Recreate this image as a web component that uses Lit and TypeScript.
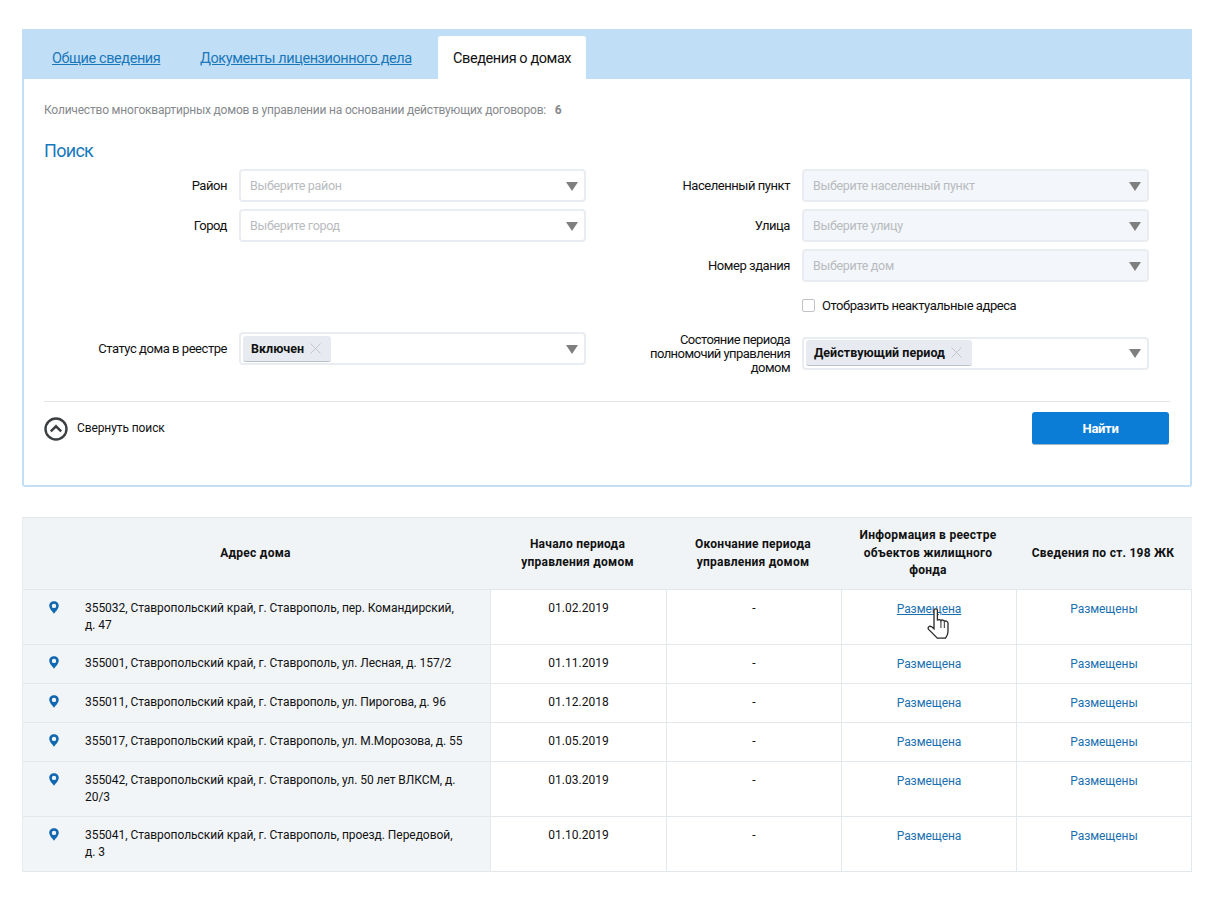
import { LitElement, html, css, svg } from "lit";
import { customElement } from "lit/decorators.js";

const rows = [
  { a: "355032, Ставропольский край, г. Ставрополь, пер. Командирский, д. 47", s: "01.02.2019", tall: true, hover: true },
  { a: "355001, Ставропольский край, г. Ставрополь, ул. Лесная, д. 157/2", s: "01.11.2019" },
  { a: "355011, Ставропольский край, г. Ставрополь, ул. Пирогова, д. 96", s: "01.12.2018" },
  { a: "355017, Ставропольский край, г. Ставрополь, ул. М.Морозова, д. 55", s: "01.05.2019" },
  { a: "355042, Ставропольский край, г. Ставрополь, ул. 50 лет ВЛКСМ, д. 20/3", s: "01.03.2019", tall: true },
  { a: "355041, Ставропольский край, г. Ставрополь, проезд. Передовой, д. 3", s: "01.10.2019", tall: true },
];

@customElement("app-root")
export class AppRoot extends LitElement {
  static styles = css`
    :host { display: block; width: 1220px; height: 904px; background: #fff; font-family: Roboto, "Liberation Sans", sans-serif; color: #111; box-sizing: border-box; padding: 29px 28px 0 22px; }
    * { box-sizing: border-box; }
    .card { height: 458px; border: 2px solid #c3dff5; border-top: 0; border-radius: 0 0 3px 3px; margin-bottom: 30px; }
    .tabs { height: 50px; margin: 0 -2px; background: #c0dff7; display: flex; align-items: flex-end; padding-left: 30px; }
    .tab { height: 43px; font-size: 14.5px; letter-spacing: -0.42px; line-height: 45px; white-space: nowrap; }
    .tab a { color: #1a77b9; text-decoration: underline; display: inline-block; }
    .tab.t1 { width: 148px; }
    .tab.t2 { width: 238px; }
    .tab.active { width: 148px; background: #fff; border-radius: 3px 3px 0 0; padding-left: 15px; color: #111; }
    .body { padding: 0 20px; }
    .count { font-size: 12px; letter-spacing: -0.2px; color: #86898c; margin-top: 23px; line-height: 16px; height: 16px; }
    .count b { margin-left: 6px; font-weight: 700; }
    h2 { margin: 21px 0 0; font-size: 18px; letter-spacing: -0.7px; line-height: 24px; font-weight: 400; color: #1878bd; height: 24px; }
    .form { display: grid; grid-template-columns: 542px 563px; margin-top: 6px; }
    .col { display: flex; flex-direction: column; }
    .row { display: flex; align-items: center; gap: 12px; margin-bottom: 7px; }
    .row.flush { margin-bottom: 0; }
    .row.state { margin: 20px 0 0; }
    .lab { font-size: 13px; letter-spacing: -0.45px; text-align: right; flex: 1 1 auto; line-height: 17px; }
    .row.state .lab { flex: 0 0 143px; margin: 1px 0 -1px auto; line-height: 14px; letter-spacing: -0.55px; }
    .sel { width: 347px; flex: none; height: 33px; border: 2px solid #e9edf1; border-radius: 4px; background: #fff; display: flex; align-items: center; padding: 0 6px 0 9px; font-size: 12.5px; letter-spacing: -0.3px; color: #b8bbbe; position: relative; }
    .sel.off { background: #f3f6fa; }
    .sel .ph { flex: 1; }
    .arrow { width: 0; height: 0; border-left: 6.5px solid transparent; border-right: 6.5px solid transparent; border-top: 9px solid #7f7f7f; margin-top: 1px; }
    .chip { height: 26px; margin-left: -7px; background: #e7ebf1; border-bottom: 1px solid #b9c1cb; border-radius: 3px; display: flex; align-items: center; gap: 5px; padding: 0 9px 0 8px; font-size: 12.5px; letter-spacing: 0.03px; font-weight: 700; color: #111; margin-right: auto; }
    .chip svg { display: block; }
    .left-spacer { height: 83px; }
    .check { display: flex; align-items: center; gap: 7px; font-size: 13px; letter-spacing: -0.45px; margin: 16px 0 0 216px; height: 14px; }
    .box { width: 13px; height: 13px; border: 1px solid #bfc3c7; border-radius: 2px; background: #fff; flex: none; }
    .rule { height: 1px; background: #e3e5e7; margin-top: 27px; width: 1126px; }
    .foot { display: flex; justify-content: space-between; width: 1125px; padding-top: 10px; }
    .collapse { display: flex; align-items: flex-start; gap: 9px; font-size: 12px; letter-spacing: -0.1px; padding-top: 5px; line-height: 16px; }
    .collapse svg { display: block; }
    .collapse span { padding-top: 3px; }
    .btn { width: 137px; height: 33px; background: #0c7dd6; border-bottom: 1px solid #9db6cb; border-radius: 3px; color: #fff; font-size: 13px; letter-spacing: -0.3px; font-weight: 700; display: flex; align-items: center; justify-content: center; }
    .tbl { display: grid; grid-template-columns: 468px 176px 175px 175px 175px; width: 1170px; border-top: 1px solid #e3e8ed; border-left: 1px solid #e9edf1; }
    .c { border-right: 1px solid #e3e8ed; border-bottom: 1px solid #e3e8ed; font-size: 12px; line-height: 17px; text-align: center; padding: 10px 10px 0; position: relative; }
    .h { background: #f0f4f7; height: 72px; font-weight: 700; letter-spacing: 0.25px; line-height: 17.5px; border-right: 0; display: flex; align-items: center; justify-content: center; padding: 0 16px 0 13px; }
    .addr { background: #f1f5f8; text-align: left; padding: 10px 25px 0 62px; letter-spacing: -0.05px; }
    .addr svg { position: absolute; left: 26px; top: 11px; }
    .rh { height: 39px; }
    .rh.tall { height: 55px; }
    .link { color: #1a6fb0; padding-top: 11px; letter-spacing: -0.08px; }
    .link.hover span { text-decoration: underline; }
    .hand { position: absolute; left: 85px; top: 18px; }
  `;

  private cross() {
    return svg`<svg width="13" height="13" viewBox="0 0 13 13"><path d="M1.5 1.5 L11.5 11.5 M11.5 1.5 L1.5 11.5" stroke="#c3c7cc" stroke-width="1" fill="none"/></svg>`;
  }

  private select(ph: string, off = false) {
    return html`<div class="sel ${off ? "off" : ""}"><span class="ph">${ph}</span><span class="arrow"></span></div>`;
  }

  private chipSel(t: string) {
    return html`<div class="sel"><span class="chip">${t}${this.cross()}</span><span class="arrow"></span></div>`;
  }

  render() {
    return html`
      <div class="card">
        <div class="tabs">
          <div class="tab t1"><a>Общие сведения</a></div>
          <div class="tab t2"><a>Документы лицензионного дела</a></div>
          <div class="tab active">Сведения о домах</div>
        </div>
        <div class="body">
          <div class="count">Количество многоквартирных домов в управлении на основании действующих договоров: <b>6</b></div>
          <h2>Поиск</h2>
          <div class="form">
            <div class="col">
              <div class="row"><div class="lab">Район</div>${this.select("Выберите район")}</div>
              <div class="row"><div class="lab">Город</div>${this.select("Выберите город")}</div>
              <div class="left-spacer"></div>
              <div class="row"><div class="lab">Статус дома в реестре</div>${this.chipSel("Включен")}</div>
            </div>
            <div class="col">
              <div class="row"><div class="lab">Населенный пункт</div>${this.select("Выберите населенный пункт", true)}</div>
              <div class="row"><div class="lab">Улица</div>${this.select("Выберите улицу", true)}</div>
              <div class="row flush"><div class="lab">Номер здания</div>${this.select("Выберите дом", true)}</div>
              <div class="check"><span class="box"></span>Отобразить неактуальные адреса</div>
              <div class="row state"><div class="lab">Состояние периода полномочий управления домом</div>${this.chipSel("Действующий период")}</div>
            </div>
          </div>
          <div class="rule"></div>
          <div class="foot">
            <div class="collapse">
              <svg width="24" height="24" viewBox="0 0 24 24"><circle cx="12" cy="12" r="10.5" fill="none" stroke="#3c3f42" stroke-width="2.4"/><path d="M6.8 14.4 L12 9.3 L17.2 14.4" fill="none" stroke="#3c3f42" stroke-width="2.4"/></svg>
              <span>Свернуть поиск</span>
            </div>
            <div class="btn">Найти</div>
          </div>
        </div>
      </div>
      <div class="tbl">
        <div class="c h">Адрес дома</div>
        <div class="c h">Начало периода управления домом</div>
        <div class="c h">Окончание периода управления домом</div>
        <div class="c h">Информация в реестре объектов жилищного фонда</div>
        <div class="c h">Сведения по ст. 198 ЖК</div>
        ${rows.map((r) => html`
          <div class="c addr rh ${r.tall ? "tall" : ""}">
            <svg width="10" height="13" viewBox="0 0 10 13"><path fill-rule="evenodd" d="M5 0.2 C7.8 0.2 9.8 2.3 9.8 4.8 C9.8 7.6 6.8 10.4 5 12.7 C3.2 10.4 0.2 7.6 0.2 4.8 C0.2 2.3 2.2 0.2 5 0.2 Z M5 2.7 A2.2 2.2 0 1 0 5 7.1 A2.2 2.2 0 1 0 5 2.7 Z" fill="#1268b0"/></svg>
            ${r.a}
          </div>
          <div class="c rh ${r.tall ? "tall" : ""}">${r.s}</div>
          <div class="c rh ${r.tall ? "tall" : ""}">-</div>
          <div class="c link rh ${r.tall ? "tall" : ""} ${r.hover ? "hover" : ""}"><span>Размещена</span>
            ${r.hover ? html`<svg class="hand" width="23" height="32" viewBox="0 0 23 32"><path d="M7 2.2 C7 0.3 10.4 0.3 10.4 2.2 L10.4 12.6 C11 11.2 13.6 11.2 14 12.8 C14.6 11.6 17 11.8 17.4 13.4 C18.2 12.6 20.8 13 21 15 L21 22.6 C21 26 19.6 29 18 30.4 L10.6 30.4 C8.6 28.4 5.4 25.2 1.6 21.4 C0.2 19.6 2.4 17.4 4.4 18.6 L7 20.8 Z" fill="#fff" stroke="#2a2a2a" stroke-width="1.3"/><path d="M13.9 13 V20 M17.4 13.6 V20" stroke="#555" stroke-width="1.2" fill="none"/><path d="M10.6 30 H18" stroke="#777" stroke-width="1.4"/></svg>` : ""}
          </div>
          <div class="c link rh ${r.tall ? "tall" : ""}">Размещены</div>
        `)}
      </div>
    `;
  }
}
